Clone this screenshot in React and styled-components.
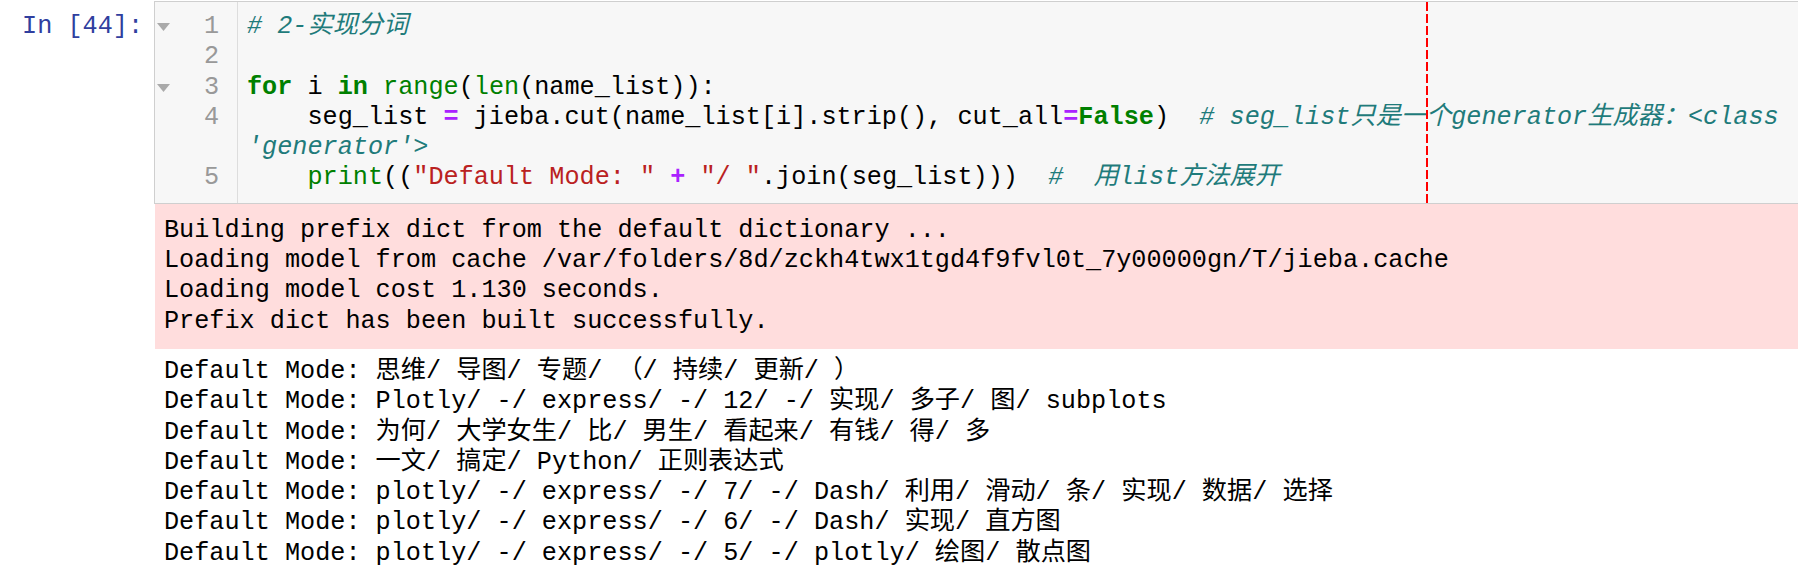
import React from 'react';
import styled, { createGlobalStyle } from 'styled-components';

const GlobalStyle = createGlobalStyle`
body {
    margin:0;
    background:#fff;
    overflow:hidden;
}
`;

const MONO = `"Liberation Mono", "Noto Sans CJK SC", monospace`;
const LINE = '30.3px';

const codeLines = [
    { n: 1, fold: true, rows: 1 },
    { n: 2, rows: 1 },
    { n: 3, fold: true, rows: 1 },
    { n: 4, rows: 2 },
    { n: 5, rows: 1 },
];

const stderrLines = [
    'Building prefix dict from the default dictionary ...',
    'Loading model from cache /var/folders/8d/zckh4twx1tgd4f9fvl0t_7y00000gn/T/jieba.cache',
    'Loading model cost 1.130 seconds.',
    'Prefix dict has been built successfully.',
];

const stdoutLines = [
    'Default Mode: 思维/ 导图/ 专题/ （/ 持续/ 更新/ ）',
    'Default Mode: Plotly/ -/ express/ -/ 12/ -/ 实现/ 多子/ 图/ subplots',
    'Default Mode: 为何/ 大学女生/ 比/ 男生/ 看起来/ 有钱/ 得/ 多',
    'Default Mode: 一文/ 搞定/ Python/ 正则表达式',
    'Default Mode: plotly/ -/ express/ -/ 7/ -/ Dash/ 利用/ 滑动/ 条/ 实现/ 数据/ 选择',
    'Default Mode: plotly/ -/ express/ -/ 6/ -/ Dash/ 实现/ 直方图',
    'Default Mode: plotly/ -/ express/ -/ 5/ -/ plotly/ 绘图/ 散点图',
];

function FoldArrow() {
    return (
        <svg width="13" height="8" viewBox="0 0 13 8">
            <polygon points="0,0 13,0 6.5,8" fill="#aaa" />
        </svg>
    );
}

export default function App() {
    return (
        <Notebook>
            <GlobalStyle />
            <CellRow>
                <Prompt>In [44]:</Prompt>
                <InputArea>
                    <Gutter>
                        {codeLines.map(l => (
                            <GutterRow key={l.n} rows={l.rows}>
                                <FoldSlot>{l.fold && <FoldArrow />}</FoldSlot>
                                <LineNo>{l.n}</LineNo>
                            </GutterRow>
                        ))}
                    </Gutter>
                    <Code>
                        <CodeLine><Cm># 2-实现分词</Cm></CodeLine>
                        <CodeLine>{' '}</CodeLine>
                        <CodeLine>
                            <Kw>for</Kw> i <Kw>in</Kw> <Bi>range</Bi>(<Bi>len</Bi>(name_list)):
                        </CodeLine>
                        <CodeLine>
                            {'    seg_list '}<Op>=</Op>{' jieba.cut(name_list[i].strip(), cut_all'}<Op>=</Op><Kw>False</Kw>{')  '}
                            <Cm>{'# seg_list只是一个generator生成器：<class'}</Cm>
                        </CodeLine>
                        <CodeLine><Cm>{"'generator'>"}</Cm></CodeLine>
                        <CodeLine>
                            {'    '}<Bi>print</Bi>{'(('}<Str>"Default Mode: "</Str>{' '}<Op>+</Op>{' '}<Str>"/ "</Str>{'.join(seg_list)))  '}
                            <Cm>{'#  用list方法展开'}</Cm>
                        </CodeLine>
                    </Code>
                    <Ruler />
                </InputArea>
            </CellRow>
            <CellRow>
                <PromptSpacer />
                <Output kind="stderr">
                    {stderrLines.map((t, i) => <OutLine key={i}>{t}</OutLine>)}
                </Output>
            </CellRow>
            <CellRow>
                <PromptSpacer />
                <Output kind="stdout">
                    {stdoutLines.map((t, i) => <OutLine key={i}>{t}</OutLine>)}
                </Output>
            </CellRow>
        </Notebook>
    );
}

const Notebook = styled.div`
width:1820px;
display:flex;
flex-direction:column;
padding-top:1px;
font-family:${MONO};
font-size:25.2px;
color:#000;
`;

const CellRow = styled.div`
display:flex;
align-items:stretch;
`;

const Prompt = styled.div`
width:155px;
flex:none;
box-sizing:border-box;
padding:11px 12px 0 0;
text-align:right;
line-height:${LINE};
color:#303F9F;
white-space:pre;
`;

const PromptSpacer = styled.div`
width:155px;
flex:none;
`;

const InputArea = styled.div`
flex:1;
position:relative;
display:flex;
background:#f7f7f7;
border:1px solid #cfcfcf;
margin-left:-1px;
`;

const Gutter = styled.div`
width:83px;
flex:none;
box-sizing:border-box;
padding:10px 0 9px;
border-right:1px solid #ddd;
`;

const GutterRow = styled.div`
height:calc(${LINE} * ${p => p.rows});
display:flex;
align-items:flex-start;
justify-content:space-between;
padding-right:18px;
`;

const FoldSlot = styled.div`
width:16px;
height:${LINE};
display:flex;
align-items:center;
padding-left:2px;
`;

const LineNo = styled.div`
line-height:${LINE};
color:#999;
`;

const Code = styled.div`
flex:1;
padding:10px 0 9px 9px;
`;

const CodeLine = styled.div`
line-height:${LINE};
height:${LINE};
white-space:pre;
`;

const Kw = styled.span`
color:#008000;
font-weight:bold;
`;

const Bi = styled.span`
color:#008000;
`;

const Op = styled.span`
color:#AA22FF;
font-weight:bold;
`;

const Str = styled.span`
color:#BA2121;
`;

const Cm = styled.span`
color:#1f7b7b;
font-style:italic;
`;

const Ruler = styled.div`
position:absolute;
top:0;
bottom:0;
left:1271px;
width:2px;
background:repeating-linear-gradient(to bottom, #f00 0, #f00 9px, transparent 9px, transparent 12px);
`;

const Output = styled.div`
flex:1;
background:${p => (p.kind === 'stderr' ? '#fdd' : 'transparent')};
padding:${p => (p.kind === 'stderr' ? '12px 9px' : '8px 9px')};
`;

const OutLine = styled.div`
line-height:${LINE};
white-space:pre;
`;
